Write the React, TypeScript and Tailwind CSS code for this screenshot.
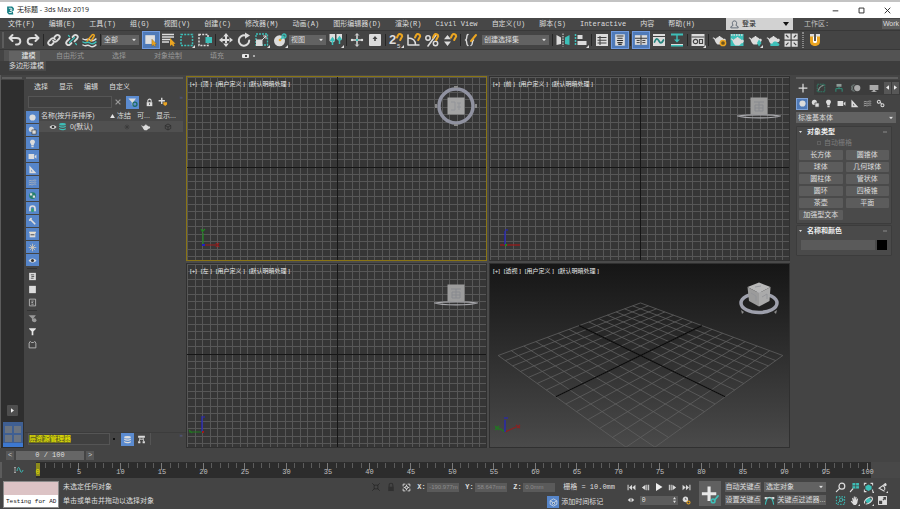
import React from "react";

const W = "#dcdcdc";
const T = "#3dbfb8";
const O = "#eba521";

const line = { fill: "none", strokeLinecap: "round" as const, strokeLinejoin: "round" as const };

const teapot = (
  <path
    fill={W}
    d="M2 5.500c1.200 0 2 .6 2.500 1.400.8-1 2-1.600 3-1.800l.3-1h1.400l.3 1c1.200.2 2.400.9 3 1.900 1.500-.5 2.500.2 2.200 1.400-.3 1.200-1.400 1.800-2.700 2-.5 1-1.300 1.600-2 2H6.600C5.300 11.600 4.400 10.200 3.800 8.500 3.500 7.300 2.900 6.500 1.600 6.300z"
  />
);

const hook = <path {...line} stroke={O} strokeWidth="2" d="M9 5.500 10.200 3c1.200-1.800 4-.8 4 1.200L12.200 8" />;
const corner = <path fill={W} d="M16 13v3h-3z" />;

const glyphs: Record<string, React.ReactNode> = {
  undo: <path {...line} stroke={W} strokeWidth="2" d="M5.500 3 2.500 6l3 3M3 6h6.500c5 0 5 6.500.5 6.500H9" />,
  redo: <path {...line} stroke={W} strokeWidth="2" d="M10.500 3l3 3-3 3M13 6H6.500c-5 0-5 6.500-.5 6.500h1" />,
  link: (
    <g {...line} stroke={W} strokeWidth="1.800">
      <path d="M7.500 11 6 12.500c-2 1.800-5-.9-3.300-3l2.800-2.800c1.200-1 2.900-.6 3.500.8" />
      <path d="M8.500 5 10 3.500c2-1.800 5 .9 3.300 3l-2.800 2.800c-1.200 1-2.900.6-3.500-.8" />
    </g>
  ),
  unlink: (
    <g {...line} strokeWidth="1.800">
      <path stroke={W} d="M7.500 11 6 12.500c-2 1.800-5-.9-3.300-3l2.800-2.800" />
      <path stroke={W} d="M8.500 5 10 3.500c2-1.800 5 .9 3.300 3l-2.800 2.800" />
      <path stroke={T} strokeWidth="1.300" d="M10.500 5.500l-5 5M4.500 3.500l1 1M11.500 11.500l1 1" />
    </g>
  ),
  bind: (
    <g {...line} strokeWidth="1.500">
      <path stroke={W} d="M1 7c3 2 4-1 7 1s4 0 6-1M1 13c3 2 4-1 7 1s4 0 6-1" />
      <path stroke={T} d="M1 10c3 2 4-1 7 1s4 0 6-1" />
      <path stroke={O} d="M5 9l5-6c1-1.200 3 0 2 1.500L9 9" />
    </g>
  ),
  selectObject: (
    <g>
      <path fill="#dedede" d="M1.500 2.500h11v10h-11z" />
      <path fill={O} stroke="#6b5523" strokeWidth=".4" d="M9 7v8l2-1.500 1 2 1.500-.8-1-2h2z" />
    </g>
  ),
  byName: (
    <g>
      <path stroke={W} strokeWidth="1.500" d="M1 2.500h12M1 5h12M1 7.500h8M1 10h7" />
      <path fill={O} d="M9 6v8l2-1.500 1 2 1.500-.8-1-2h2z" />
    </g>
  ),
  rect: (
    <g>
      <path fill="none" stroke={T} strokeWidth="1.500" strokeDasharray="2 1.200" d="M2 2.500h11.500v11H2z" />
      {corner}
    </g>
  ),
  window: (
    <g>
      <path fill="none" stroke={W} strokeWidth="1.500" strokeDasharray="2 1.200" d="M2 2.500h9v11H2z" />
      <path fill={T} d="M8.500 5H15v6H8.500z" />
    </g>
  ),
  move: (
    <g fill={W}>
      <path d="M7 4h2v8H7zM4 7h8v2H4zM8 1 10.800 4.500H5.200zM8 15 10.800 11.500H5.200zM1 8 4.500 5.200v5.600zM15 8 11.500 5.200v5.600z" />
    </g>
  ),
  rotate: (
    <g>
      <path {...line} stroke={W} strokeWidth="2" d="M9.500 3.500a5.200 5.200 0 1 0 3.700 5" />
      <path fill={W} d="M9 .5l5 3L9 6.800z" />
    </g>
  ),
  scale: (
    <g>
      <path fill="none" stroke={T} strokeWidth="1.300" strokeDasharray="2 1" d="M2 2h11.500v11H2z" />
      <path fill={W} d="M2 7.500h6.500V14H2z" />
      <path {...line} stroke={W} d="M8 8l4-4M9.500 4H12v2.500" />
      {corner}
    </g>
  ),
  place: (
    <g>
      <circle cx="7.500" cy="8.800" r="5.500" fill={W} />
      <path {...line} stroke={T} strokeWidth="1.600" d="M8 8l4-4" />
      <circle cx="12" cy="4" r="2" fill="none" stroke={T} strokeWidth="1.300" />
      <circle cx="8" cy="8" r="1.300" fill={O} />
      {corner}
    </g>
  ),
  pivot: (
    <g>
      <path fill={W} d="M1.500 2h5.500v7L4.500 11 1.500 9zM8.500 2H14v5l-2.500 2-3-2z" />
      <path stroke={T} strokeWidth="1.500" d="M4.500 6v7M2.500 9l2-3 2 3M11.500 5v7M9.500 8l2-3 2 3" fill="none" />
      {corner}
    </g>
  ),
  manipulate: (
    <g>
      <path stroke={W} strokeWidth="1.500" d="M8 2v12M2 8h12" />
      <path {...line} stroke={W} d="M6.500 3.200 8 1.500l1.500 1.700M6.500 12.800 8 14.500l1.500-1.700" />
      <circle cx="3" cy="8" r="1.200" fill={W} />
      <circle cx="13" cy="8" r="1.200" fill={W} />
      <path stroke={T} strokeWidth="2" d="M7 8h2" />
    </g>
  ),
  keyboard: (
    <g>
      <rect x="2" y="2" width="12" height="12" rx="1" fill={W} />
      <path fill="#444" d="M8 4l2.500 3h-1.700v2H7.200V7H5.500z" />
    </g>
  ),
  angle: (
    <g>
      <path {...line} stroke={W} strokeWidth="1.500" d="M2 3v10h11M2 6c5 0 7.500 3 7.500 7" />
      {hook}
    </g>
  ),
  percent: (
    <g>
      <path {...line} stroke={W} strokeWidth="1.600" d="M12 3 4 14" />
      <circle cx="4" cy="6" r="2.200" fill="none" stroke={W} strokeWidth="1.500" />
      <circle cx="11.500" cy="11.500" r="2.200" fill="none" stroke={W} strokeWidth="1.500" />
      {hook}
    </g>
  ),
  spinner: (
    <g>
      <path fill={W} d="M5.500 3 9 7.300H2zM5.500 14 9 9.500H2z" />
      {hook}
    </g>
  ),
  sets: (
    <g {...line}>
      <path stroke={W} strokeWidth="1.400" d="M5 2.500C3 2.500 4.500 8 2.500 8 4.500 8 3 13.500 5 13.500M8 13.500c2 0 .5-4 2.500-5.500" />
      <path stroke={O} strokeWidth="2" d="M8 9l5-6" />
    </g>
  ),
  mirror: (
    <g>
      <path fill={W} d="M1.500 3 6 5.500v6.500L1.500 13z" />
      <path fill={T} d="M14.500 3 10 5.500v6.500l4.500 1z" />
      <path stroke={W} strokeDasharray="1.500 1" d="M8 1.500v13" />
    </g>
  ),
  align: (
    <g>
      <path stroke={T} strokeWidth="1.500" strokeDasharray="2 1" d="M2.500 2v12" />
      <path fill={W} d="M4.500 3h5v4h-5zM4.500 9h9v4h-9z" />
      {corner}
    </g>
  ),
  layers: (
    <g>
      <path fill={W} d="M2 2h12v12H2z" />
      <path stroke="#444" strokeWidth="1.100" d="M3.500 5.500h9M3.500 8.200h9M3.500 11h9M6 4v9" />
    </g>
  ),
  scene: (
    <g>
      <path fill={W} d="M2.500 1.500h11v13h-11z" />
      <path stroke="#333" strokeWidth="1.200" d="M4 3.500h8M5 6h6M4.500 8.500h7M5 11h6M6 13h4" />
    </g>
  ),
  ribbon: (
    <g>
      <path fill={W} d="M1 2.500h14v11H1z" />
      <path stroke="#333" strokeWidth="1.100" d="M1 6h14M8 2.500v11M3 8.500h3.500M3 11h3.500M9.500 8.500H13M9.500 11H13" />
    </g>
  ),
  curve: (
    <g>
      <path fill={W} d="M2 2h12v12H2z" />
      <path stroke="#444" d="M2 4.500h12" />
      <path {...line} stroke="#26857f" strokeWidth="1.700" d="M3.500 10c1.500-4 3-4 4.500-1s3 2 4.500-1" />
    </g>
  ),
  schematic: (
    <g>
      <path fill={T} d="M2 1.500h12v2H2zM2 12.500h12v2H2zM7.300 3h1.400v5H7.300zM8 10.500 5 7.500h6z" />
      <path fill={W} d="M2 12h12v1H2z" />
    </g>
  ),
  material: (
    <g>
      <path fill={W} d="M1.500 2h13v12h-13z" />
      <path stroke="#444" d="M1.500 5h13" />
      <circle cx="5.500" cy="9.500" r="2.200" fill="none" stroke="#444" strokeWidth="1.200" />
      <path fill="none" stroke="#444" strokeWidth="1.200" d="M9.500 7.500h3v4h-3z" />
      {corner}
    </g>
  ),
  renderSetup: (
    <g>
      {teapot}
      <circle cx="12" cy="11" r="2.600" fill="#6d5520" stroke={O} strokeWidth="1.500" />
    </g>
  ),
  renderFrame: (
    <g>
      <path fill={T} d="M1.500 2h13v12h-13z" />
      <path stroke={W} strokeDasharray="1.500 1" strokeWidth="1.500" d="M2 3h12" />
      <g transform="translate(0 1)">{teapot}</g>
    </g>
  ),
  render: (
    <g>
      {teapot}
      <path fill={T} d="M12 7.500 14.500 11 12 14.500 10 11z" />
      {corner}
    </g>
  ),
  cloud: (
    <g>
      {teapot}
      <path fill={T} d="M6 14c-2-1 0-3 1.500-2.500C8 9 12 9 12.500 11c2.500 0 2.500 3 .5 3z" />
    </g>
  ),
  gallery: (
    <g>
      <path fill={W} d="M1.500 1.500h6v6h-6zM8.700 1.500h6v6h-6zM1.500 8.700h6v6h-6zM8.700 8.700h6v6h-6z" />
      <path stroke="#444" strokeWidth="1.200" d="M3 3l2.500 2.500M13.200 3l-2.500 2.500M3 13.200l2.500-2.500M13.200 13.200l-2.500-2.500" />
    </g>
  ),
  magnet: (
    <g>
      <path fill={O} d="M3 2h10v7.500c0 6-10 6-10 0z" />
      <path fill={W} d="M3 2h4v2.500H3zM9 2h4v2.500H9z" />
      <path fill="#fff" d="M6 4.500h4v5c0 2-4 2-4 0z" />
      <path fill="#565656" d="M7 2h2v7H7z" />
    </g>
  ),
  sphere: <circle cx="8" cy="8" r="5.500" fill={W} />,
  shapes: (
    <g>
      <circle cx="6" cy="6" r="4.500" fill={W} />
      <path fill={W} stroke="#3c3c3c" strokeWidth="1.200" d="M7 7h7.500v7.500H7z" />
    </g>
  ),
  bulb: <path fill={W} d="M8 1.500c5 0 5.500 5 2.500 7.500v2h-5V9C2.500 6.500 3 1.500 8 1.500zM6 12h4v2.500H6z" />,
  camera: <path fill={W} d="M1 3.500h10v9H1zM12 7l3-2.500v7.500l-3-2.500z" />,
  helper: <path fill={W} fillRule="evenodd" d="M2.500 1 15 14.500H2.500zM5.500 8.500v3H8.300z" />,
  waves: (
    <path {...line} stroke="#b8b8b8" strokeWidth="1.400" d="M2 5c3-2 4 1 6 0s4-2 6-1M2 8.500c3-2 4 1 6 0s4-2 6-1M2 12c3-2 4 1 6 0s4-2 6-1" />
  ),
  gears: (
    <g fill="none" stroke={W} strokeWidth="1.800">
      <circle cx="5" cy="5" r="2.700" />
      <circle cx="11.500" cy="11" r="2.700" />
      <path d="M7.500 6 10 8.500" />
    </g>
  ),
  group: (
    <g>
      <circle cx="8" cy="8" r="6" fill="#267f6b" />
      <path fill={W} d="M3.500 4h4v4h-4zM8.500 8h4v4h-4z" />
    </g>
  ),
  xref: (
    <g>
      <path fill="none" stroke={W} strokeWidth="3" d="M3.500 13V8c0-6 9-6 9 0v5" />
      <path fill="#2fa36f" d="M6 8h4v6H6z" />
    </g>
  ),
  bone: <path {...line} stroke={W} strokeWidth="3" d="M4 4l8 8M3 5.500 5.500 3" />,
  container: (
    <g>
      <path fill={W} d="M3 5h10v8H3z" />
      <path fill="#e9dfc8" d="M2 3h12v2.500H2z" />
      <path stroke="#333" strokeWidth="1.500" d="M4.500 8.500h7" />
    </g>
  ),
  frost: (
    <g {...line} stroke="#d9c9b4" strokeWidth="1.400">
      <path d="M8 2v12M2 8h12M3.800 3.800l8.400 8.400M12.200 3.800l-8.400 8.400" />
    </g>
  ),
  eye: (
    <g>
      <path fill={W} d="M1 8c3.500-5 10.500-5 14 0-3.500 5-10.500 5-14 0z" />
      <circle cx="8" cy="8" r="2.700" fill="#333" />
    </g>
  ),
  page: (
    <g>
      <path fill={W} d="M2 1.500h12v13H2z" />
      <path stroke="#444" strokeWidth="1.500" d="M5 5h6M6 8h5M5 11h5" />
    </g>
  ),
  blank: <path fill={W} d="M2 1.500h12v13H2z" />,
  pageOutline: (
    <g fill="none" stroke="#bbb" strokeWidth="1.500">
      <path d="M2.500 2h11v12h-11zM6 5.500h4M6 8h3M6 11h4" />
    </g>
  ),
  funnelDim: (
    <g fill="#999">
      <path d="M1 2h13L9.500 8v6L7 12V8z" />
      <circle cx="11.500" cy="11" r="3.500" />
    </g>
  ),
  funnel: <path fill="#e6e6e6" d="M2 2h12v1.500L9.500 8v6.500h-3V8L2 3.500z" />,
  folder: <path fill="none" stroke="#bbb" strokeWidth="1.600" d="M2 5.500 4 2.500l2 2h4l2-2 2 3V14H2z" />,
  filterAdd: (
    <g>
      <path fill={W} d="M2 2h11L9 7.500V13l-2-1.500v-4z" />
      <circle cx="11.500" cy="10.500" r="3" fill="none" stroke="#1d6a62" strokeWidth="1.800" />
    </g>
  ),
  lock: (
    <g>
      <path fill="none" stroke={W} strokeWidth="1.800" d="M5 8V5c0-4 6-4 6 0v3" />
      <path fill={W} d="M3 7.500h10v7H3z" />
      <path fill="#444" d="M7.300 9.500h1.400v3H7.300z" />
    </g>
  ),
  addLayer: (
    <g>
      <path stroke={W} strokeWidth="2.200" d="M6 1v10M1 6h10" />
      <path fill={O} d="M8.500 8.500h6v3.500l-3 2.500-3-2.500z" />
    </g>
  ),
  stack: (
    <g fill={T}>
      <ellipse cx="8" cy="4" rx="6" ry="2.300" />
      <path d="M2 6c3 2.500 9 2.500 12 0v2.500c-3 2.500-9 2.500-12 0zM2 10.500c3 2.500 9 2.500 12 0V13c-3 2.500-9 2.500-12 0z" />
    </g>
  ),
  stackWhite: (
    <g fill={W}>
      <ellipse cx="8" cy="4" rx="6" ry="2.300" />
      <path d="M2 6.300c3 2.500 9 2.500 12 0v2c-3 2.500-9 2.500-12 0zM2 10.500c3 2.500 9 2.500 12 0v2.300c-3 2.500-9 2.500-12 0z" />
    </g>
  ),
  tree: (
    <g>
      <path fill={W} d="M2 1.500h12v3.500H2zM2 11h4v3.500H2zM10 11h4v3.500h-4z" />
      <path stroke={W} strokeWidth="1.500" fill="none" d="M5 5v2l-1 4M11 5v2l1 4M5 7.500h6" />
    </g>
  ),
  teapot: <g transform="translate(0 1)">{teapot}</g>,
  cubeDim: <path fill="none" stroke="#2b2b2b" strokeWidth="1.500" d="M8 2l5.500 3v6L8 14l-5.500-3V5zM2.500 5 8 8l5.500-3M8 8v6" />,
  frostDim: (
    <g stroke="#383838" strokeWidth="1.500">
      <path d="M8 3v10M3 8h10M4.500 4.500l7 7M11.500 4.500l-7 7" />
    </g>
  ),
  plus: <path stroke={W} strokeWidth="2" d="M8 1v14M1 8h14" />,
  modify: (
    <g fill="none">
      <path stroke="#2f7d68" strokeWidth="1.500" d="M2 14V2h12v12z" strokeDasharray="3 1" />
      <path stroke="#9fb8b0" strokeWidth="1.500" d="M4 12C5 7 8 4.500 12 4" />
    </g>
  ),
  hierarchy: (
    <g>
      <path fill="#8d9a96" d="M4 1.500h8V6H4z" />
      <path fill="none" stroke="#2f8d78" strokeWidth="1.600" d="M8 6v3M3 14V9h10v5" />
    </g>
  ),
  motion: (
    <g>
      <circle cx="10" cy="8" r="5" fill="#a9a9a9" />
      <path fill="none" stroke="#7a8a86" strokeWidth="1.200" d="M6 2.500c-5 2-5 9 0 11M4 2.500c-5 2-5 9 0 11" />
    </g>
  ),
  display: <path fill="#a9a9a9" d="M1 3h14v8H1zM6 11h4v2h2v1.500H4V13h2z" />,
  isolate: (
    <g fill="none" stroke="#2b2b2b" strokeWidth="1.500">
      <path d="M2 2l4 4M14 2l-4 4M2 14l4-4M14 14l-4-4M5 5h6v6H5z" />
    </g>
  ),
  lockDim: (
    <g>
      <path fill="none" stroke="#303030" strokeWidth="1.800" d="M5 8V5c0-4 6-4 6 0v3" />
      <path fill="#303030" d="M3.500 7.500h9v7h-9z" />
    </g>
  ),
  absolute: (
    <g fill="none" stroke={W} strokeWidth="1.600">
      <path d="M2 6V2h4M10 2h4v4M14 10v4h-4M6 14H2v-4" />
      <circle cx="8" cy="8" r="2.500" />
      <path d="M8 3v3M8 10v3M3 8h3M10 8h3" />
    </g>
  ),
  cubeTag: (
    <g>
      <path fill="none" stroke="#c7d3e0" strokeWidth="1.600" d="M8 1.500 14 5v6l-6 3.500L2 11V5zM2 5l6 3.500L14 5" />
      <circle cx="8" cy="9.500" r="2.500" fill="#c7d3e0" />
      <circle cx="8" cy="9.500" r="1" fill="#33506e" />
    </g>
  ),
  first: <path fill={W} d="M1 3h1.800v10H1zM9 3v10L3.500 8zM15 3v10L9.500 8z" />,
  prev: <path fill={W} d="M8 3v10L1.500 8zM9.500 3h1.800v10H9.500zM12.700 3h1.800v10h-1.800z" />,
  play: <path fill="#eee" d="M2 0l13 8-13 8z" />,
  next: <path fill={W} d="M8 3v10l6.500-5zM4.700 3h1.800v10H4.700zM1.500 3h1.800v10H1.500z" />,
  last: <path fill={W} d="M15 3h-1.800v10H15zM7 3v10l5.500-5zM1 3v10l5.500-5z" />,
  keyMode: <path fill={W} d="M7 3.500v9L1.500 8zM9 3.500v9L14.500 8z" />,
  clock: (
    <g fill="none" strokeWidth="1.800">
      <circle cx="6" cy="6" r="4" stroke={W} fill={W} />
      <path stroke="#444" strokeWidth="1.200" d="M6 3.500V6h2" />
      <circle cx="11.500" cy="11.500" r="2.800" stroke={O} />
    </g>
  ),
  bigKey: (
    <g>
      <path fill="#e8e8e8" d="M6 2h2.500v4.500H13V9H8.500v4.500H6V9H1.500V6.500H6z" />
      <path {...line} stroke={T} strokeWidth="1.300" d="M14.500 9.500 11.500 13" />
      <circle cx="10.500" cy="13.500" r="1.500" fill="none" stroke={T} strokeWidth="1.200" />
    </g>
  ),
  tangent: (
    <g fill="none">
      <path stroke={T} strokeWidth="1.600" d="M2 14c2-14 10-14 12 0" />
      <path stroke={W} strokeWidth="1.300" d="M2 4h12" />
      <path fill={W} d="M1 3h3v3H1zM12 3h3v3h-3z" />
    </g>
  ),
  zoom: (
    <g {...line} stroke={W} strokeWidth="1.800">
      <circle cx="10" cy="6" r="4.200" />
      <path d="M6.800 9.200 2 14" />
    </g>
  ),
  zoomAll: (
    <g>
      <path fill={T} d="M5 1.500h9.500v8H5z" />
      <path stroke="#444" d="M9.700 1.500v8M5 5.500h9.500" />
      <path {...line} stroke={W} strokeWidth="1.800" d="M5.500 10 2 14" />
    </g>
  ),
  extents: (
    <g>
      <path fill="none" stroke={W} strokeWidth="1.500" d="M2 5V2h3M11 2h3v3M14 11v3M5 14H2v-3" />
      <path fill={T} d="M8 3.500 12.500 6v4.500L8 13l-4.500-2.500V6z" />
      {corner}
    </g>
  ),
  fov: (
    <g>
      <path fill="none" stroke={W} strokeWidth="1.600" d="M13 2 3 9l8 4.500M8 5.500c3 1 4 3 3 6" />
      <circle cx="12" cy="4" r="2" fill={W} />
      {corner}
    </g>
  ),
  region: (
    <g {...line}>
      <path stroke={T} strokeWidth="1.500" strokeDasharray="1 3" d="M2 2.500h12v11H2z" />
      <circle cx="9" cy="7" r="2.500" stroke={T} strokeWidth="1.300" />
      <path stroke={T} strokeWidth="1.300" d="M7 9l-2.500 2.500" />
    </g>
  ),
  hand: (
    <g>
      <path fill={W} d="M4.500 4.500 6 4l1 3V2h1.500v5L9.500 2.500 11 3l-.5 4.500L12 5l1.200.5L12 12l-2 2.500H7L2.500 9.500 3.800 8.500 5.500 10z" />
      {corner}
    </g>
  ),
  orbit: (
    <g>
      <path fill={T} d="M8 3.500 12 6v4L8 12.500 4 10V6z" />
      <path fill="none" stroke={W} strokeWidth="1.600" d="M2.500 12.500C.5 8 9 1 13.500 3.500M13.500 4C15 8 8 14 4 13" />
      {corner}
    </g>
  ),
  maximize: (
    <g>
      <path fill={W} d="M1.500 1.500h13v13h-13z" />
      <path fill="#444" d="M3 8.500h4.500V13H3zM8.500 3H13v4.500l-1.500-1.500-2 2L8 6.500l2-2z" />
    </g>
  ),
};

function Icon({ name, className = "size-4" }: { name: string; className?: string }) {
  return (
    <svg viewBox="0 0 16 16" className={`shrink-0 ${className}`} aria-hidden="true">
      {glyphs[name]}
    </svg>
  );
}

function Tool({ name, active }: { name: string; active?: boolean }) {
  return (
    <button
      aria-label={name}
      className={`flex h-[18px] w-[18px] shrink-0 items-center justify-center ${active ? "border border-[#6f9ade] bg-[#4f7ab8]" : ""}`}
    >
      <Icon name={name} className={active ? "size-[14px]" : "size-4"} />
    </button>
  );
}

function Sep() {
  return <span className="mx-px h-3 w-px shrink-0 bg-[#262626]" />;
}

function Select({ label, value, className }: { label: string; value: string; className: string }) {
  return (
    <div className={`relative shrink-0 ${className}`}>
      <select
        aria-label={label}
        className="block size-full appearance-none rounded-none border-0 bg-[#626262] py-0 pl-[2px] pr-2 leading-[10px] text-[#dcdcdc]"
      >
        <option>{value}</option>
      </select>
      <svg viewBox="0 0 6 4" className="pointer-events-none absolute right-[3px] top-1/2 h-[3px] w-1 -translate-y-1/2">
        <path fill="#e0e0e0" d="M0 0h6L3 4z" />
      </svg>
    </div>
  );
}

function TitleBar() {
  return (
    <header className="flex h-[18px] shrink-0 items-center border-t-2 border-[#c3c3c3] bg-white pl-[6px] text-[#222]">
      <svg viewBox="0 0 16 16" className="size-[9px]" aria-hidden="true">
        <path fill="#177f84" d="M2 1h9l3 3v4l-2 1 1 6H5l-3-3z" />
        <path fill="none" stroke="#fff" strokeWidth="1.500" d="M5 4h4c2 0 2 3.500 0 3.500H7h2c2.500 0 2.500 4 0 4H5" />
      </svg>
      <h1 className="ml-[2px] whitespace-pre font-['Open_Sans','Noto_Sans_CJK_SC',sans-serif] leading-3">无标题 - 3ds Max 2019</h1>
      <div className="ml-auto flex h-full">
        {[
          ["最小化", "M1 5.500h8"],
          ["最大化", "M1.500 1.500h7v7h-7z"],
          ["关闭", "M1 1l8 8M9 1 1 9"],
        ].map(([label, d]) => (
          <button key={label} aria-label={label} className="flex w-[26px] items-center justify-center">
            <svg viewBox="0 0 10 10" className="size-[7px]">
              <path d={d} fill="none" stroke="#222" strokeWidth="1.300" />
            </svg>
          </button>
        ))}
      </div>
    </header>
  );
}

const menus = [
  "文件(F)", "编辑(E)", "工具(T)", "组(G)", "视图(V)", "创建(C)", "修改器(M)", "动画(A)", "图形编辑器(D)",
  "渲染(R)", "Civil View", "自定义(U)", "脚本(S)", "Interactive", "内容", "帮助(H)",
];

function MenuBar() {
  return (
    <nav className="flex h-3 shrink-0 items-center bg-[#474747] pl-2">
      <div className="flex flex-1 justify-between pr-[31px]">
        {menus.map((m) => (
          <button key={m} className="whitespace-nowrap">{m}</button>
        ))}
      </div>
      <button className="flex h-3 w-[67px] items-center bg-[#d2d2d2] px-1 text-[#222]">
        <svg viewBox="0 0 16 16" className="size-[9px]">
          <path fill="none" stroke="#5a6472" strokeWidth="1.600" d="M5.500 9.500C3 6 4 1.500 8 1.500s5 4.500 2.500 8l4 2.500v2h-13v-2z" />
        </svg>
        <span className="ml-[3px]">登录</span>
        <svg viewBox="0 0 6 4" className="ml-auto h-1 w-[6px]">
          <path fill="#111" d="M0 0h6L3 4z" />
        </svg>
      </button>
      <span className="ml-[11px] w-[78px] text-[#c4c4c4]">工作区:</span>
      <button className="w-[18px] bg-[#5c5c5c] text-center font-['Liberation_Sans',sans-serif]">Work</button>
    </nav>
  );
}

function Toolbar() {
  return (
    <div className="flex h-5 shrink-0 items-center border-y border-[#383838] bg-[#444]">
      <span className="ml-[2px] mr-[2px] h-4 w-[2px] bg-[#5c5c5c]" />
      <Tool name="undo" /><Tool name="redo" /><Sep />
      <Tool name="link" /><Tool name="unlink" /><Tool name="bind" /><Sep />
      <Select label="选择过滤器" value="全部" className="mr-[3px] h-[10px] w-[37px]" />
      <Tool name="selectObject" active /><Tool name="byName" /><Tool name="rect" /><Tool name="window" /><Sep />
      <Tool name="move" /><Tool name="rotate" /><Tool name="scale" /><Tool name="place" />
      <Select label="参考坐标系" value="视图" className="mr-px h-[10px] w-[37px]" />
      <Tool name="pivot" /><Sep />
      <Tool name="manipulate" /><Tool name="keyboard" /><Sep />
      <button aria-label="捕捉开关" className="relative h-[18px] w-[18px] shrink-0">
        <span className="absolute left-[2px] top-px font-['Liberation_Sans',sans-serif] text-[13px] font-bold leading-4">2</span>
        <span className="absolute bottom-0 left-[10px] font-['Liberation_Sans',sans-serif] text-[6px] leading-[6px]">5</span>
        <svg viewBox="0 0 16 16" className="absolute left-px top-px size-4">{hook}{corner}</svg>
      </button>
      <Tool name="angle" /><Tool name="percent" /><Tool name="spinner" /><Sep />
      <Tool name="sets" />
      <Select label="命名选择集" value="创建选择集" className="mx-[2px] h-[10px] w-[67px]" />
      <Sep />
      <Tool name="mirror" /><Tool name="align" /><Sep />
      <Tool name="layers" /><Tool name="scene" active /><Sep />
      <Tool name="ribbon" active /><Tool name="curve" /><Tool name="schematic" /><Sep />
      <Tool name="material" /><Sep />
      <Tool name="renderSetup" /><Tool name="renderFrame" /><Tool name="render" /><Tool name="cloud" /><Tool name="gallery" />
      <span className="mx-[2px] h-4 w-[2px] shrink-0 border-x border-dotted border-[#888]" />
      <Tool name="magnet" />
    </div>
  );
}

function Ribbon() {
  return (
    <div className="shrink-0 bg-[#444]">
      <div className="ml-1 flex h-[11px] items-center bg-[#535353] pl-[5px] text-[#999]">
        <button className="h-[10px] w-[31px] bg-[#636363] pl-2 text-[#ededed]">建模</button>
        <button className="ml-4">自由形式</button>
        <button className="ml-7">选择</button>
        <button className="ml-7">对象绘制</button>
        <button className="ml-7">填充</button>
        <button aria-label="显示完整功能区" className="ml-[18px] flex items-center gap-1">
          <span className="flex h-1 w-[7px] items-center justify-center rounded-[1px] bg-[#e6e6e6]">
            <span className="size-[2px] bg-[#444]" />
          </span>
          <span className="size-[2px] bg-[#aaa]" />
        </button>
      </div>
      <div className="flex h-[14px] items-start bg-[#3d3d3d] pl-[9px]">
        <button className="h-[10px] bg-[#4b4b4b] pr-[2px]">多边形建模</button>
      </div>
    </div>
  );
}

function LeftStrip() {
  return (
    <aside className="flex w-6 shrink-0 flex-col items-center border-l border-[#5c5c5c] bg-[#2e2e2e]">
      <div className="flex h-[5px] w-full items-center bg-[#444]"><span className="ml-px h-[2px] w-5 bg-[#5e5e5e]" /></div>
      <button aria-label="展开" className="mb-[6px] mt-auto flex h-[11px] w-[11px] items-center justify-center rounded-[1px] bg-[#4e4e4e]">
        <svg viewBox="0 0 4 6" className="h-[5px] w-[3px]"><path fill="#eee" d="M0 0v6l4-3z" /></svg>
      </button>
      <button aria-label="视口布局" className="mb-px grid h-[25px] w-5 grid-cols-2 gap-[2px] border-b-4 border-[#3d78cf] bg-[#3f5f92] px-[2px] pb-px pt-1">
        <span className="bg-[#6b7480]" /><span className="bg-[#6b7480]" /><span className="bg-[#6b7480]" /><span className="bg-[#6b7480]" />
      </button>
    </aside>
  );
}

const displayFilters = ["sphere", "shapes", "bulb", "camera", "helper", "waves", "group", "xref", "bone", "container", "frost", "eye"];

function SideTool({ name, on }: { name: string; on?: boolean }) {
  return (
    <button aria-label={name} className={`mt-px flex h-3 w-[13px] items-center justify-center ${on ? "bg-[#5685c9]" : ""}`}>
      <Icon name={name} className="size-[9px]" />
    </button>
  );
}

function SceneExplorer() {
  return (
    <section className="flex w-[162px] shrink-0 flex-col bg-[#444] pl-px">
      <div className="flex h-[5px] items-center"><span className="ml-px h-[2px] w-[157px] bg-[#5e5e5e]" /></div>
      <div className="flex h-[14px] items-center gap-[11px] pl-[9px]">
        <button>选择</button><button>显示</button><button>编辑</button><button>自定义</button>
      </div>
      <div className="flex h-4 items-center pl-[3px]">
        <input aria-label="查找" className="h-3 w-[84px] border border-[#555] bg-[#404040]" />
        <button aria-label="清除" className="ml-[3px] flex w-[6px]">
          <svg viewBox="0 0 10 10" className="size-[6px]"><path stroke="#999" strokeWidth="2" d="M1 1l8 8M9 1 1 9" /></svg>
        </button>
        <button aria-label="选择过滤" className="ml-[5px] flex size-[13px] items-center justify-center bg-[#5b8bd0]"><Icon name="filterAdd" className="size-[11px]" /></button>
        <button aria-label="锁定" className="ml-[6px] flex"><Icon name="lock" className="size-[9px]" /></button>
        <button aria-label="新建层" className="ml-1 flex"><Icon name="addLayer" className="size-[10px]" /></button>
        <span className="ml-auto mr-[3px] h-full text-[6px] leading-[8px] text-[#565c86]">»</span>
      </div>
      <div className="flex min-h-0 flex-1">
        <div className="flex w-[14px] shrink-0 flex-col items-center">
          {displayFilters.map((n) => (
            <SideTool key={n} name={n} on />
          ))}
          <span className="mt-[2px] h-px w-[10px] bg-[#333]" />
          {["page", "blank", "pageOutline"].map((n) => (
            <SideTool key={n} name={n} />
          ))}
          <span className="mt-[2px] h-px w-[10px] bg-[#333]" />
          {["funnelDim", "funnel", "folder"].map((n) => (
            <SideTool key={n} name={n} />
          ))}
        </div>
        <div className="min-w-0 flex-1 pr-[3px]">
          <table className="w-full table-fixed border-collapse text-left">
            <thead>
              <tr className="h-[11px] bg-[#474747]">
                <th className="w-[78px] p-0 pl-[2px] font-normal">
                  <span className="flex items-center justify-between pr-[2px] font-['Liberation_Sans','Noto_Sans_CJK_SC',sans-serif]">
                    名称(按升序排序)
                    <svg viewBox="0 0 6 5" className="h-1 w-[5px]"><path fill="#e6e6e6" d="M3 0 6 5H0z" /></svg>
                  </span>
                </th>
                <th className="w-5 p-0 font-normal">冻结</th>
                <th className="w-[19px] p-0 font-['Liberation_Sans','Noto_Sans_CJK_SC',sans-serif] font-normal">可...</th>
                <th className="p-0 font-['Liberation_Sans','Noto_Sans_CJK_SC',sans-serif] font-normal">显示...</th>
              </tr>
            </thead>
            <tbody>
              <tr className="h-[11px] bg-[#505050]">
                <td className="p-0 pl-[10px]">
                  <span className="flex items-center gap-[1px] font-['Liberation_Sans','Noto_Sans_CJK_SC',sans-serif]">
                    <Icon name="eye" className="size-2" />
                    <Icon name="stack" className="size-[9px]" />
                    <span className="ml-[2px]">0(默认)</span>
                  </span>
                </td>
                <td className="p-0 pl-[6px]"><Icon name="frostDim" className="size-2" /></td>
                <td className="p-0 pl-[3px]"><Icon name="teapot" className="size-[11px]" /></td>
                <td className="p-0 pl-2"><Icon name="cubeDim" className="size-2" /></td>
              </tr>
            </tbody>
          </table>
        </div>
      </div>
      <div className="flex h-4 items-start border-t border-[#3c3c3c] pl-[3px]">
        <div className="flex h-3 w-[82px] items-center border border-[#555] bg-[#404040]">
          <span className="bg-[#6f6f1c] leading-2 text-[#f2f200]">层资源管理器</span>
        </div>
        <span className="ml-[3px] mt-[5px] size-[2px] bg-[#111]" />
        <button aria-label="按层排序" className="ml-[6px] flex size-[13px] items-center justify-center bg-[#5b8bd0]"><Icon name="stackWhite" className="size-[9px]" /></button>
        <button aria-label="按层次排序" className="ml-[3px] mt-[2px] flex"><Icon name="tree" className="size-[9px]" /></button>
        <span className="ml-1 h-3 w-px bg-[#555]" />
        <span className="ml-auto mr-[3px] h-full text-[6px] leading-[6px] text-[#565c86]">»</span>
      </div>
    </section>
  );
}

const steps = (n: number) => Array.from({ length: n * 2 + 1 }, (_, i) => i - n);

function OrthoGrid() {
  return (
    <svg viewBox="0 0 300 184" preserveAspectRatio="xMidYMid slice" className="absolute inset-0 size-full" aria-hidden="true">
      <g stroke="#575757" strokeWidth="1" shapeRendering="crispEdges">
        {steps(20).map((i) => (
          <path key={`v${i}`} d={`M${151 + i * 7.5} 0V184`} />
        ))}
        {steps(13).map((i) => (
          <path key={`h${i}`} d={`M0 ${90.5 + i * 7.5}H300`} />
        ))}
        <path stroke="#161616" d="M151 0V184M0 90.500H300" />
      </g>
    </svg>
  );
}

function project(u: number, v: number): string {
  const s = u + v;
  const t = u - v;
  const w = 1 - 0.16 * s;
  return `${(151 + (71.4 * t) / w).toFixed(2)} ${(92 + (34.8 * s) / w).toFixed(2)}`;
}

function PerspectiveGrid() {
  return (
    <svg viewBox="0 0 300 184" preserveAspectRatio="xMidYMid slice" className="absolute inset-0 size-full" aria-hidden="true">
      <g fill="none" stroke="#606060" strokeWidth=".8">
        {steps(7).map((i) => (
          <path key={i} d={`M${project(i / 7, -1)}L${project(i / 7, 1)}M${project(-1, i / 7)}L${project(1, i / 7)}`} />
        ))}
        <path stroke="#0c0c0c" strokeWidth="1.200" d={`M${project(0, -1)}L${project(0, 1)}M${project(-1, 0)}L${project(1, 0)}`} />
      </g>
    </svg>
  );
}

function Axes({ kind }: { kind: string }) {
  return (
    <svg viewBox="0 0 40 24" className="absolute bottom-[9px] left-0 h-6 w-10" aria-hidden="true">
      <g fill="none" strokeWidth="1.200">
        {kind === "top" && <path stroke="#a01818" d="M16 18h13M29 16l3 4M32 16l-3 4" />}
        {kind === "top" && <path stroke="#1f8a1f" d="M16 18V6M14 2l1.500 2.500L18 2" />}
        {kind === "top" && <path stroke="#2020c0" strokeWidth="2" d="M15 18h3" />}
        {kind === "front" && <path stroke="#a01818" d="M10 18h20" />}
        {kind === "front" && <path stroke="#2222c8" d="M15 18V4M15 3h3" />}
        {kind === "front" && <path stroke="#1f8a1f" strokeWidth="2" d="M15 18h2" />}
        {kind === "left" && <path stroke="#1f7a1f" d="M15 18H2M2 16l3 3" />}
        {kind === "left" && <path stroke="#2222c8" d="M15 18V4M14 3h4" />}
        {kind === "left" && <path stroke="#a01818" strokeWidth="2" d="M15 18h2" />}
        {kind === "persp" && <path stroke="#1f7a1f" d="M15 18l-6-4M5 12l4 4M9 12l-4 4" />}
        {kind === "persp" && <path stroke="#8e2020" d="M15 18l11-5M26 11l4 3M30 11l-3 3" />}
        {kind === "persp" && <path stroke="#2222c8" d="M15 18V6M14 4h4" />}
      </g>
    </svg>
  );
}

function ViewCube({ kind }: { kind: string }) {
  return (
    <svg viewBox="0 0 44 44" className="absolute right-2 top-[7px] size-11" aria-hidden="true">
      {kind === "top" && (
        <g>
          <circle cx="22" cy="22" r="17" fill="none" stroke="#9092a0" strokeWidth="3.500" />
          <path fill="#8a8a8a" d="M20 2h4v2h-4zM20 40h4v2h-4zM1 20h2v4H1zM41 20h2v4h-2z" />
          <path fill="#a4a4a4" d="M13.500 13.500h17v17h-17z" />
          <path fill="none" stroke="#929499" d="M17 18h4v8h-4M23 19h4M25 19v7M23 23h4" />
        </g>
      )}
      {(kind === "front" || kind === "left") && (
        <g>
          <path fill="#9c9c9c" d="M13.500 13.500h17v17h-17z" />
          <path fill="none" stroke="#888a8f" d="M17 18h10M18 21h8v6h-8zM22 18v9M18 24h8" />
          <path fill="none" stroke="#a8a8ac" strokeWidth="1.200" d="M1 32c8-1.500 34-1.500 42 0-6 2.500-36 2.500-42 0z" />
        </g>
      )}
      {kind === "persp" && (
        <g>
          <ellipse cx="22" cy="32" rx="18" ry="9.500" fill="none" stroke="#9ea0ac" strokeWidth="3.500" />
          <path fill="#b8b8b8" d="M22 11.500 33.500 16 22 22 10.500 16z" />
          <path fill="#9b9b9b" d="M10.500 16 22 22v13.500L12 30z" />
          <path fill="#aaaaaa" d="M33.500 16 22 22v13.500L32.500 30z" />
          <path fill="none" stroke="#909297" strokeWidth=".8" d="M14 22l5 3v5M25 26l5-3v5M18 16l6-1" />
          <path fill="#8a8a8a" d="M4 39l3 2-2 2zM40 39l-3 2 2 2z" />
        </g>
      )}
    </svg>
  );
}

function Viewport({ kind, name, active }: { kind: string; name: string; active?: boolean }) {
  const persp = kind === "persp";
  return (
    <section
      aria-label={name}
      className={`relative overflow-hidden border ${active ? "border-[#8a7514]" : "border-[#303030]"} ${persp ? "bg-linear-to-b from-[#161616] to-[#4a4a4a]" : "bg-[#363636]"}`}
    >
      {persp ? <PerspectiveGrid /> : <OrthoGrid />}
      <div className="relative mt-[3px] flex gap-1 whitespace-pre pl-[3px] font-['Liberation_Sans','Noto_Sans_CJK_SC',sans-serif] text-[6px] leading-2 text-[#ececec]">
        <button>[+]</button>
        <button>{`[${name} ]`}</button>
        <button>[用户定义 ]</button>
        <button>[默认明暗处理 ]</button>
      </div>
      <ViewCube kind={kind} />
      <Axes kind={kind} />
    </section>
  );
}

const primitives = ["长方体", "圆锥体", "球体", "几何球体", "圆柱体", "管状体", "圆环", "四棱锥", "茶壶", "平面", "加强型文本"];

function Rollout({ title, children }: { title: string; children: React.ReactNode }) {
  return (
    <section className="rounded-[1px] border border-[#3c3c3c] bg-[#4a4a4a] px-[2px] pb-[3px]">
      <h2 className="flex h-[10px] items-center font-bold text-[#f0f0f0]">
        <svg viewBox="0 0 6 4" className="mr-[5px] h-[2px] w-[3px]"><path fill="#ddd" d="M0 0h6L3 4z" /></svg>
        {title}
        <span className="ml-auto mr-[2px] h-[2px] w-1 border-y border-[#6a6a6a]" />
      </h2>
      {children}
    </section>
  );
}

function CommandPanel() {
  return (
    <aside className="ml-1 flex w-[106px] shrink-0 flex-col bg-[#444] pl-[2px]">
      <div className="flex h-[5px] items-center"><span className="h-[2px] w-[102px] bg-[#5e5e5e]" /></div>
      <div className="flex h-[15px] items-center bg-[#3c3c3c]">
        {["plus", "modify", "hierarchy", "motion", "display"].map((n) => (
          <button key={n} aria-label={n} className={`flex h-full w-[18px] items-center justify-center pr-[3px] ${n === "plus" ? "bg-[#444]" : ""}`}>
            <Icon name={n} className="size-[10px]" />
          </button>
        ))}
        {["M4 0v6L0 3z", "M0 0v6l4-3z"].map((d) => (
          <button key={d} aria-label="滚动" className="mr-px flex h-3 w-[7px] items-center justify-center bg-[#575757]">
            <svg viewBox="0 0 4 6" className="h-[5px] w-[3px]"><path fill="#eee" d={d} /></svg>
          </button>
        ))}
      </div>
      <div className="flex h-[17px] items-center gap-px">
        {["sphere", "shapes", "bulb", "camera", "helper", "waves", "gears"].map((n) => (
          <button key={n} aria-label={n} className={`flex h-3 w-3 items-center justify-center ${n === "sphere" ? "border border-[#7fa3d8] bg-[#4f7ab8]" : ""}`}>
            <Icon name={n} className="size-[9px]" />
          </button>
        ))}
      </div>
      <Select label="类别" value="标准基本体" className="mr-1 h-[11px]" />
      <div className="mr-2 mt-[3px] flex flex-col gap-px">
        <Rollout title="对象类型">
          <label className="ml-[18px] flex h-[12px] items-center gap-[3px] text-[#7d7d7d]">
            <input type="checkbox" disabled className="size-1 appearance-none border border-[#606060]" />
            自动栅格
          </label>
          <div className="mt-px grid grid-cols-2 gap-x-[3px] gap-y-[2px]">
            {primitives.map((p) => (
              <button key={p} className="h-[10px] rounded-[1px] bg-[#5c5c5c] leading-[10px]">{p}</button>
            ))}
          </div>
        </Rollout>
        <Rollout title="名称和颜色">
          <div className="mt-1 flex items-center gap-[2px] pb-[2px] pl-[2px]">
            <input aria-label="名称" className="h-[10px] w-[74px] bg-[#5a5a5a]" />
            <button aria-label="颜色" className="h-[10px] w-[10px] bg-black" />
          </div>
        </Rollout>
      </div>
    </aside>
  );
}

const frames = Array.from({ length: 101 }, (_, i) => i);

function Timeline() {
  return (
    <section className="shrink-0 bg-[#444]">
      <div className="flex h-[14px] items-center gap-[2px] pl-[6px]">
        <button aria-label="上一帧" className="h-[9px] w-2 bg-[#575757] leading-[8px] text-[#ccc]">&lt;</button>
        <button className="h-[9px] w-[68px] bg-[#666] leading-[9px]">0 / 100</button>
        <button aria-label="下一帧" className="h-[9px] w-2 bg-[#575757] leading-[8px] text-[#ccc]">&gt;</button>
      </div>
      <div className="flex h-4">
        <button aria-label="迷你曲线编辑器" className="flex w-9 items-center justify-center border-l-2 border-[#5c5c5c]">
          <svg viewBox="0 0 20 12" className="h-[6px] w-[10px]">
            <path stroke="#bbb" strokeWidth="1.500" d="M2 1v10M0 1h4M0 11h4" />
            <path fill="none" stroke={T} strokeWidth="2" d="M6 8c2-9 4-9 6-2s4 5 6 0" />
          </svg>
        </button>
        <div className="relative flex-1 bg-[#2c2c2c]">
          <span className="absolute left-0 top-px h-[13px] w-1 bg-[#8c8a1c]" />
          <div className="flex h-[7px] items-start justify-between pl-px pr-[3px] pt-px">
            {frames.map((f) => (
              <span key={f} className={f % 5 === 0 ? "h-[7px] w-px bg-[#7a7a7a]" : "h-[5px] w-px bg-[#5c5c5c]"} />
            ))}
          </div>
          <div className="relative flex justify-between pl-px pr-[3px] leading-[7px] text-[#c0c0c0]">
            {frames.filter((f) => f % 5 === 0).map((f) => (
              <span key={f} className={f === 0 ? "flex w-px justify-center text-[#e6e200]" : "flex w-px justify-center"}>{f}</span>
            ))}
          </div>
        </div>
        <span className="w-[29px] bg-[#484848]" />
      </div>
    </section>
  );
}

function Coord({ axis, value }: { axis: string; value: string }) {
  return (
    <label className="ml-[6px] flex items-center">
      <b className="w-[10px]">{axis}:</b>
      <input defaultValue={value} className="h-[9px] w-8 bg-[#5a5a5a] pl-[2px] font-['Liberation_Sans',sans-serif] text-[6px] text-[#8c8c8c]" />
    </label>
  );
}

function StatusBar() {
  return (
    <footer className="flex h-[31px] shrink-0 items-start bg-[#444] pt-[3px]">
      <div className="ml-[3px] flex h-[27px] w-[56px] flex-col border border-[#8a8a8a] font-['Liberation_Mono',monospace] text-[6px]">
        <div className="flex-1 bg-[#dcc3c5]" />
        <input aria-label="MAXScript 侦听器" defaultValue="Testing for AD" className="h-3 w-full bg-white pl-[2px] text-[#111]" />
      </div>
      <div className="ml-1 flex flex-col gap-[5px] pt-[2px] leading-[9px]">
        <p>未选定任何对象</p>
        <p>单击或单击并拖动以选择对象</p>
      </div>
      <div className="ml-auto mr-3 flex flex-col gap-1 pt-px">
        <div className="flex h-[10px] items-center">
          <button aria-label="孤立" className="flex"><Icon name="isolate" className="size-[10px]" /></button>
          <button aria-label="锁定选择" className="ml-[5px] flex"><Icon name="lockDim" className="size-[10px]" /></button>
          <button aria-label="绝对模式" className="ml-[6px] flex"><Icon name="absolute" className="size-[9px]" /></button>
          <Coord axis="X" value="-190.977m" />
          <Coord axis="Y" value="58.647mm" />
          <Coord axis="Z" value="0.0mm" />
          <span className="ml-2 whitespace-nowrap">栅格 = 10.0mm</span>
        </div>
        <button className="ml-[176px] flex h-3 items-center gap-[2px]">
          <span className="flex size-3 items-center justify-center bg-[#5685c9]"><Icon name="cubeTag" className="size-[9px]" /></span>
          添加时间标记
        </button>
      </div>
      <div className="flex w-[64px] flex-col gap-[3px] pt-px">
        <div className="flex h-[10px] items-center justify-between">
          <button aria-label="转至开头" className="flex"><Icon name="first" className="size-[9px]" /></button>
          <button aria-label="上一帧" className="flex"><Icon name="prev" className="size-[9px]" /></button>
          <button aria-label="播放" className="flex"><Icon name="play" className="size-2" /></button>
          <button aria-label="下一帧" className="flex"><Icon name="next" className="size-[9px]" /></button>
          <button aria-label="转至结尾" className="flex"><Icon name="last" className="size-[9px]" /></button>
        </div>
        <div className="flex h-[10px] items-center justify-between">
          <button aria-label="关键点模式" className="flex"><Icon name="keyMode" className="size-2" /></button>
          <div className="flex h-[9px] w-[38px] items-center justify-between bg-[#5c5c5c] pr-[2px]">
            <input aria-label="当前帧" defaultValue="0" className="h-[9px] w-7 bg-transparent pl-[2px]" />
            <svg viewBox="0 0 4 8" className="h-[6px] w-[3px]"><path fill="#ddd" d="M2 0l2 3H0zM2 8l2-3H0z" /></svg>
          </div>
          <button aria-label="时间配置" className="flex"><Icon name="clock" className="size-[9px]" /></button>
        </div>
      </div>
      <button aria-label="设置关键点" className="ml-2 flex h-[25px] w-[22px] items-center justify-center bg-[#606060]"><Icon name="bigKey" className="size-5" /></button>
      <div className="ml-1 flex w-9 flex-col gap-[3px] pt-px">
        <button className="h-[10px] whitespace-nowrap bg-[#5e5e5e]">自动关键点</button>
        <button className="h-[10px] whitespace-nowrap bg-[#5e5e5e]">设置关键点</button>
      </div>
      <div className="ml-[3px] flex w-[62px] flex-col gap-[3px] pt-px">
        <Select label="关键点集" value="选定对象" className="h-[10px] w-full" />
        <div className="flex h-[10px] items-center gap-[2px]">
          <button aria-label="切线" className="flex"><Icon name="tangent" className="size-[11px]" /></button>
          <button className="h-[10px] w-[49px] whitespace-nowrap bg-[#5e5e5e] font-['Liberation_Sans','Noto_Sans_CJK_SC',sans-serif]">关键点过滤器...</button>
        </div>
      </div>
      <div className="ml-[9px] mr-3 grid grid-cols-4 gap-x-[3px] gap-y-[2px] pt-px">
        {["zoom", "zoomAll", "extents", "fov", "region", "hand", "orbit", "maximize"].map((n) => (
          <button key={n} aria-label={n} className="flex"><Icon name={n} className="size-[11px]" /></button>
        ))}
      </div>
    </footer>
  );
}

export default function App() {
  return (
    <div className="flex h-screen flex-col overflow-hidden bg-[#444] font-['Liberation_Mono','Noto_Sans_CJK_SC',monospace] text-[7px] leading-[10px] text-[#dedede]">
      <TitleBar />
      <MenuBar />
      <Toolbar />
      <Ribbon />
      <main className="flex min-h-0 flex-1">
        <LeftStrip />
        <SceneExplorer />
        <div className="grid min-w-0 flex-1 grid-cols-2 grid-rows-2 gap-[2px] bg-[#4a4a4a] pt-px">
          <Viewport kind="top" name="顶" active />
          <Viewport kind="front" name="前" />
          <Viewport kind="left" name="左" />
          <Viewport kind="persp" name="透视" />
        </div>
        <CommandPanel />
      </main>
      <Timeline />
      <StatusBar />
    </div>
  );
}
